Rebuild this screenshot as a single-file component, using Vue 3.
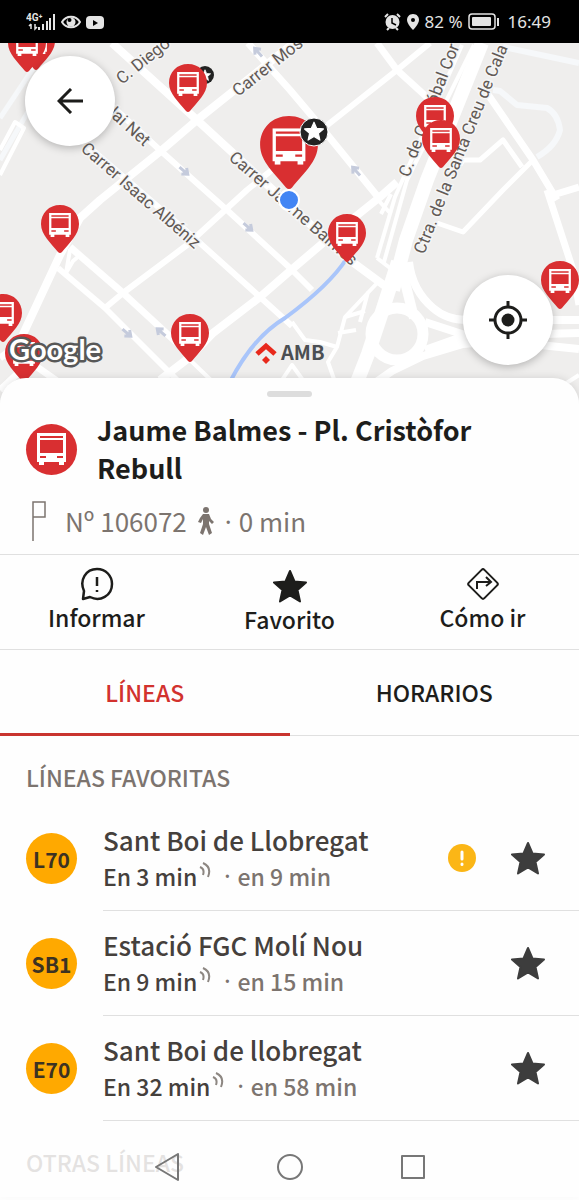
<script setup>
import { ref } from 'vue';

const activeTab = ref('lineas');

const tabs = [
  { id: 'lineas', label: 'LÍNEAS' },
  { id: 'horarios', label: 'HORARIOS' },
];

const lines = ref([
  { code: 'L70', name: 'Sant Boi de Llobregat', next: 'En 3 min', later: 'en 9 min', alert: true, favorite: true },
  { code: 'SB1', name: 'Estació FGC Molí Nou', next: 'En 9 min', later: 'en 15 min', alert: false, favorite: true },
  { code: 'E70', name: 'Sant Boi de llobregat', next: 'En 32 min', later: 'en 58 min', alert: false, favorite: true },
]);

// x and y are the tip of each pin
const stops = [
  { x: 36, y: 70 },
  { x: 27, y: 72 },
  { x: 188, y: 112 },
  { x: 60, y: 253 },
  { x: 3, y: 342 },
  { x: 24, y: 382 },
  { x: 190, y: 362 },
  { x: 347, y: 262 },
  { x: 435, y: 145 },
  { x: 441, y: 168 },
  { x: 560, y: 309 },
];

const arrows = [
  { x: 184, y: 171, r: 41 },
  { x: 248, y: 227, r: 41 },
  { x: 127, y: 333, r: 41 },
  { x: 161, y: 332, r: 221 },
  { x: 258, y: 52, r: 228 },
  { x: 356, y: 171, r: 228 },
];

const toggleFavorite = (line) => {
  line.favorite = !line.favorite;
};
</script>

<template>
  <div class="screen">
    <header class="status-bar">
      <div class="status-group">
        <svg width="30" height="20" viewBox="0 0 30 20" fill="#e4e4e4">
          <text x="0" y="9" class="network">4G⁺</text>
          <path d="M5 12v5M3 14l2-2M9 12v5l2-2" stroke="#e4e4e4" stroke-width="1.5" fill="none" />
          <path d="M12 15h2v3h-2zM16 12h2v6h-2zM20 9h2v9h-2zM23 6h2v12h-2zM27 2h2v16h-2z" />
        </svg>
        <svg width="20" height="20" viewBox="0 0 20 20">
          <path d="M1 10C5 3 15 3 19 10C15 17 5 17 1 10Z" fill="none" stroke="#e4e4e4" stroke-width="2" />
          <circle cx="10" cy="10" r="4.5" fill="#e4e4e4" />
          <circle cx="8.5" cy="8" r="2" fill="#000" />
        </svg>
        <svg width="18" height="20" viewBox="0 0 18 20">
          <rect y="4" width="18" height="13" rx="4" fill="#e4e4e4" />
          <path d="M7 8l5 3l-5 3z" fill="#000" />
        </svg>
      </div>
      <div class="status-group">
        <svg width="17" height="18" viewBox="0 0 17 18">
          <circle cx="8.5" cy="9" r="7" fill="#e4e4e4" />
          <path d="M1 4l3-3M16 4l-3-3M3 17l2-2M14 17l-2-2" stroke="#e4e4e4" stroke-width="2" />
          <path d="M8 5v5l4 2" fill="none" stroke="#000" stroke-width="1.5" />
        </svg>
        <svg width="14" height="18" viewBox="0 0 14 18">
          <path d="M7 1C3 1 1 4 1 7C1 11 7 17 7 17S13 11 13 7C13 4 11 1 7 1Z" fill="#e4e4e4" />
          <circle cx="7" cy="7" r="2" fill="#000" />
        </svg>
        <span>82 %</span>
        <svg width="32" height="18" viewBox="0 0 32 18">
          <rect x="1" y="1" width="26" height="15" rx="3" fill="none" stroke="#e4e4e4" stroke-width="1.5" />
          <rect x="4" y="4" width="19" height="9" rx="1" fill="#e4e4e4" />
          <path d="M30 5v8" stroke="#e4e4e4" stroke-width="2" />
        </svg>
        <span class="clock">16:49</span>
      </div>
    </header>

    <main>
      <section class="map">
        <svg class="map-canvas" viewBox="0 43 579 357" preserveAspectRatio="xMidYMin slice">
          <defs>
            <symbol id="bus" viewBox="0 0 29 32">
              <path
                fill="#fff"
                fill-rule="evenodd"
                d="M0 0H29V29H27V32H22V29H7V32H2V29H0ZM3 3H26V5H3ZM3 7H26V20H3ZM3 23H9V25H3ZM20 23H26V25H20Z"
              />
            </symbol>
            <symbol id="pin" viewBox="0 0 38 48">
              <path fill="#d92f31" d="M19 0C8 0 0 8 0 19C0 30 10 38 17 47Q19 49 21 47C28 38 38 30 38 19C38 8 30 0 19 0Z" />
              <use href="#bus" x="8" y="8" width="22" height="24" />
            </symbol>
            <symbol id="star" viewBox="0 0 34 34">
              <path
                fill="currentColor"
                stroke="currentColor"
                stroke-width="2"
                stroke-linejoin="round"
                d="M17 2L21.5 12.5L33 13.5L24.5 21L27 32.5L17 26.5L7 32.5L9.5 21L1 13.5L12.5 12.5Z"
              />
            </symbol>
          </defs>

          <rect y="43" width="579" height="357" fill="#efeeed" />

          <g class="road faint">
            <path d="M503 47L579 63" stroke-width="6" />
            <path d="M493 90L500 91L517 105L547 108Q558 114 560 130Q556 146 537 157" stroke-width="6" />
            <path d="M50 43L0 118M58 60L0 160" stroke-width="5" />
          </g>

          <g class="road thin">
            <path d="M462 45L395 197L377 258M474 45L407 180L384 262M377 258L390 268" />
            <path d="M378 200L391 214M391 194L381 214" />
            <path d="M0 175L24 128L15 122L0 150" />
            <path d="M70 250L66 273L73 261L79 256M380 280L345 317L337 347L320 342L305 340L292 322M345 317L365 311M338 333L356 330M368 292L360 322M337 347L328 362L335 382" />
            <path d="M190 360L214 383M280 383L292 365L305 383M540 400L579 375" />
          </g>

          <g class="road">
            <path d="M112 43L197 120L347 258L385 286" stroke-width="8" />
            <path d="M310 30L197 120L162 150L100 200L80 218L60 255L25 330L18 345" stroke-width="8" />
            <path d="M18 345L0 358M0 390L30 362L60 383" stroke-width="7" />
            <path d="M100 95L162 152L227 210L290 268L312 290" stroke-width="6" />
            <path d="M105 308L123 293L187 245L247 190L330 123L397 70L430 43" stroke-width="6" />
            <path d="M75 135L200 243L260 297L292 326" stroke-width="6" />
            <path d="M70 247L123 293L190 355" stroke-width="7" />
            <path d="M58 268L105 308L180 383" stroke-width="6" />
            <path d="M160 380L190 357L213 333L260 297L290 271L330 237L380 197L397 182" stroke-width="8" />
            <path d="M248 43L290 90L317 122L378 197" stroke-width="7" />
            <path d="M377 43L397 70L430 100" stroke-width="7" />
            <path d="M487 93L533 160L557 200" stroke-width="7" />
            <path d="M547 190L573 270L579 305M553 195L579 187" stroke-width="7" />
            <path d="M463 160L480 160L503 140L522 167M460 165L463 160" stroke-width="5" />
            <path d="M437 223L463 232L503 190L533 160" stroke-width="5" />
            <path d="M482 43L427 180L406 240L393 290" stroke-width="14" />
            <path d="M398 262L380 318L368 354L352 395" stroke-width="14" />
            <path d="M400 262L414 318" stroke-width="10" />
            <path d="M409 262Q412 290 433 308Q448 321 470 320L579 320" stroke-width="8" />
            <path d="M425 322L468 336L579 333" stroke-width="8" />
            <path d="M362 392L392 371L423 356L463 344L500 341L579 349" stroke-width="8" />
            <path d="M425 350L470 334" stroke-width="8" />
            <circle cx="397" cy="334" r="26" stroke-width="11" />
          </g>

          <path d="M347 258Q330 285 285 318Q253 337 230 382" fill="none" stroke="#a9c5fa" stroke-width="4" />

          <g fill="none" stroke="#c5cbdc" stroke-width="3">
            <path
              v-for="arrow in arrows"
              :key="`${arrow.x}-${arrow.y}`"
              d="M-6 0H4M0 -4L5 0L0 4"
              :transform="`translate(${arrow.x} ${arrow.y}) rotate(${arrow.r})`"
            />
          </g>

          <g class="street">
            <text transform="translate(122 85) rotate(-39)">C. Diego</text>
            <text transform="translate(238 97) rotate(-38)">Carrer Mos</text>
            <text transform="translate(144 147) rotate(42)" text-anchor="end">Nicolai Net</text>
            <text transform="translate(80 150) rotate(41)">Carrer Isaac Albéniz</text>
            <text transform="translate(228 159) rotate(41)">Carrer Jaume Balmes</text>
            <text transform="translate(409 178) rotate(-69)">C. de Cristóbal Cor</text>
            <text transform="translate(424 255) rotate(-68)">Ctra. de la Santa Creu de Cala</text>
          </g>

          <circle cx="205" cy="75" r="9" fill="#222" />
          <use href="#star" x="199" y="69" width="12" height="12" color="#fff" />
          <use
            v-for="stop in stops"
            :key="`${stop.x}-${stop.y}`"
            href="#pin"
            :x="stop.x - 19"
            :y="stop.y - 48"
            width="38"
            height="48"
          />
          <use href="#pin" x="260" y="116" width="58" height="73" />
          <circle cx="314" cy="132" r="14" fill="#222" stroke="#fff" stroke-width="1" />
          <use href="#star" x="304" y="121" width="20" height="20" color="#fff" />
          <circle cx="289" cy="200" r="10" fill="#4285f4" stroke="#fff" stroke-width="2" />

          <path d="M257 354L266 346L275 354" fill="none" stroke="#e8291c" stroke-width="5" />
          <path d="M266 356L270 360L266 364L262 360Z" fill="#e8291c" />
          <text x="281" y="360" class="amb">AMB</text>
          <text x="9" y="360" class="google">Google</text>
        </svg>

        <button class="round-btn back" type="button" aria-label="Volver">
          <svg width="26" height="26" viewBox="0 0 26 26" fill="none" stroke="#1d1d1b" stroke-width="3">
            <path d="M26 13H3M14 1L2 13L14 25" />
          </svg>
        </button>
        <button class="round-btn locate" type="button" aria-label="Mi ubicación">
          <svg width="38" height="38" viewBox="0 0 38 38" fill="none" stroke="#1d1d1b" stroke-width="3">
            <circle cx="19" cy="19" r="13" />
            <path d="M19 0V6M19 32V38M0 19H6M32 19H38" />
            <circle cx="19" cy="19" r="6.5" fill="#1d1d1b" stroke="none" />
          </svg>
        </button>
      </section>

      <section class="sheet">
        <div class="grip"></div>

        <div class="stop">
          <div class="stop-icon">
            <svg width="29" height="32"><use href="#bus" /></svg>
          </div>
          <h1>Jaume Balmes - Pl. Cristòfor Rebull</h1>
        </div>

        <div class="stop-info">
          <svg class="flag" width="14" height="40" viewBox="0 0 14 40" fill="none" stroke="#7c746f" stroke-width="1.5">
            <path d="M1 40V1H13V16H1" />
          </svg>
          <span>Nº 106072</span>
          <svg class="walker" width="16" height="28" viewBox="0 0 16 28" fill="#7c746f">
            <circle cx="8" cy="3" r="3" />
            <path d="M5 7H11L13 12L16 15L14 17L11 14V17L14 26L11 28L8 20L5 28L2 26L5 17V12L3 16L0 15L2 11Z" />
          </svg>
          <span class="dot">·</span>
          <span>0 min</span>
        </div>

        <div class="actions">
          <button type="button">
            <svg width="34" height="34" viewBox="0 0 34 34" fill="none" stroke="#1d1d1b" stroke-width="2.5">
              <path stroke-linejoin="round" d="M3 32L4 24C-1 13 6 2 17 2C26 2 32 9 32 17C32 29 20 35 10 30Z" />
              <path d="M17 10V19M17 23V25" />
            </svg>
            Informar
          </button>
          <button type="button">
            <svg class="star-lg" width="34" height="34"><use href="#star" /></svg>
            Favorito
          </button>
          <button type="button">
            <svg width="34" height="34" viewBox="0 0 34 34" fill="none" stroke="#1d1d1b" stroke-width="2">
              <rect x="6" y="6" width="22" height="22" rx="2" transform="rotate(45 17 17)" />
              <path d="M11 22V15H24M20 10L25 15L20 19" />
            </svg>
            Cómo ir
          </button>
        </div>

        <div class="tabs" role="tablist">
          <button
            v-for="tab in tabs"
            :key="tab.id"
            type="button"
            role="tab"
            :aria-selected="activeTab === tab.id"
            :class="{ active: activeTab === tab.id }"
            @click="activeTab = tab.id"
          >
            {{ tab.label }}
          </button>
        </div>

        <h2>LÍNEAS FAVORITAS</h2>
        <ul class="lines">
          <li v-for="line in lines" :key="line.code">
            <div class="badge">{{ line.code }}</div>
            <div class="line-body">
              <div class="line-text">
                <div class="line-name">{{ line.name }}</div>
                <div class="line-times">
                  <span class="next">{{ line.next }}</span>
                  <svg width="12" height="18" viewBox="0 0 12 18" fill="none" stroke="#8d8782" stroke-width="2">
                    <path d="M1 6Q6 8 4 14M4 2Q13 6 9 16" />
                  </svg>
                  <span class="dot">·</span>
                  <span>{{ line.later }}</span>
                </div>
              </div>
              <svg v-if="line.alert" class="alert" width="28" height="28" viewBox="0 0 28 28">
                <circle cx="14" cy="14" r="14" fill="#fbb616" />
                <path d="M14 8V15M14 20V20.5" stroke="#fff" stroke-width="3" stroke-linecap="round" />
              </svg>
              <button
                class="fav"
                :class="{ off: !line.favorite }"
                type="button"
                aria-label="Favorito"
                @click="toggleFavorite(line)"
              >
                <svg width="34" height="34"><use href="#star" /></svg>
              </button>
            </div>
          </li>
        </ul>
        <h2 class="others">OTRAS LÍNEAS</h2>
      </section>
    </main>

    <nav class="system-nav">
      <button type="button" aria-label="Atrás">
        <svg width="28" height="28" viewBox="0 0 28 28"><path d="M25 1V27L3 14Z" /></svg>
      </button>
      <button type="button" aria-label="Inicio">
        <svg width="28" height="28" viewBox="0 0 28 28"><circle cx="14" cy="14" r="12" /></svg>
      </button>
      <button type="button" aria-label="Recientes">
        <svg width="28" height="28" viewBox="0 0 28 28"><rect x="3" y="3" width="22" height="22" /></svg>
      </button>
    </nav>
  </div>
</template>

<style>
body {
  margin: 0;
  background: #fefefe;
}
</style>

<style scoped>
.screen {
  min-height: 100vh;
  overflow: hidden;
  color: #1d1d1b;
  font-family: "Noto Sans CJK SC", "Open Sans", sans-serif;
}

button {
  padding: 0;
  border: none;
  background: none;
  color: inherit;
  font-family: inherit;
  cursor: pointer;
}

svg {
  display: block;
  flex: none;
}

.status-bar {
  display: flex;
  align-items: center;
  justify-content: space-between;
  height: 43px;
  padding: 0 28px 0 26px;
  background: #000;
  color: #e4e4e4;
  font-family: "Noto Sans", sans-serif;
  font-size: 17px;
}

.status-group {
  display: flex;
  align-items: center;
  gap: 5px;
}

.network {
  font-family: Roboto, sans-serif;
  font-size: 10px;
  font-weight: 700;
}

.clock {
  margin-left: 3px;
}

.map {
  position: relative;
  height: 357px;
}

.map-canvas {
  width: 100%;
  height: 100%;
}

.road {
  fill: none;
  stroke: #fff;
  stroke-linejoin: round;
}

.thin {
  stroke-width: 4px;
}

.faint {
  stroke: #f6f8fa;
}

.street {
  fill: #625a56;
  stroke: #f5f5f5;
  stroke-width: 3px;
  paint-order: stroke;
  font-family: Roboto, sans-serif;
  font-size: 17px;
}

.amb {
  fill: #4b4f53;
  font-size: 20px;
  font-weight: 700;
}

.google {
  fill: #fff;
  stroke: #585858;
  stroke-width: 5px;
  stroke-linejoin: round;
  paint-order: stroke;
  font-family: Lato, sans-serif;
  font-size: 29px;
  font-weight: 700;
}

.round-btn {
  position: absolute;
  display: flex;
  align-items: center;
  justify-content: center;
  width: 90px;
  height: 90px;
  border-radius: 50%;
  background: #fff;
  box-shadow: 0 2px 8px rgba(0, 0, 0, 0.25);
}

.back {
  top: 13px;
  left: 25px;
}

.locate {
  right: 26px;
  bottom: 35px;
}

.sheet {
  position: relative;
  margin-top: -22px;
  padding-top: 13px;
  border-radius: 26px 26px 0 0;
  background: #fefefe;
  box-shadow: 0 0 8px rgba(0, 0, 0, 0.12);
}

.grip {
  width: 45px;
  height: 6px;
  margin: 0 auto;
  border-radius: 3px;
  background: #ddd;
}

.stop {
  display: flex;
  align-items: center;
  gap: 20px;
  padding: 14px 80px 0 26px;
}

.stop-icon,
.badge {
  display: flex;
  flex: none;
  align-items: center;
  justify-content: center;
  width: 51px;
  height: 51px;
  border-radius: 50%;
}

.stop-icon {
  background: #d92f31;
}

h1 {
  margin: 0;
  font-size: 27px;
  font-weight: 700;
  line-height: 38px;
}

.stop-info {
  display: flex;
  align-items: center;
  height: 67px;
  padding-left: 32px;
  color: #7c746f;
  font-size: 26px;
  line-height: 38px;
}

.flag {
  margin-right: 19px;
}

.walker {
  margin: 0 11px;
}

.dot {
  margin-right: 7px;
  font-family: "Noto Sans", sans-serif;
}

.actions {
  display: grid;
  grid-template-columns: repeat(3, 1fr);
  height: 94px;
  border-top: 1px solid #e0e0e0;
  border-bottom: 1px solid #e0e0e0;
}

.actions button {
  display: flex;
  flex-direction: column;
  align-items: center;
  padding-top: 12px;
  font-size: 23px;
  font-weight: 500;
  line-height: 32px;
}

.star-lg {
  margin-top: 2px;
}

.tabs {
  display: grid;
  grid-template-columns: 1fr 1fr;
}

.tabs button {
  height: 86px;
  padding-bottom: 2px;
  border-bottom: 1px solid #e0e0e0;
  font-size: 23px;
  font-weight: 500;
}

.tabs .active {
  padding-bottom: 0;
  border-bottom: 3px solid #c9352f;
  color: #d2322e;
}

h2 {
  margin: 0;
  padding: 24px 26px 12px;
  color: #7c746f;
  font-size: 23px;
  font-weight: 500;
  line-height: 34px;
}

.lines {
  margin: 0;
  padding: 0;
  list-style: none;
}

.lines li {
  display: flex;
  align-items: center;
  gap: 26px;
  padding-left: 26px;
}

.badge {
  background: #ffa900;
  color: #3c3222;
  font-size: 21px;
  font-weight: 700;
}

.line-body {
  display: flex;
  flex: 1;
  align-items: center;
  height: 104px;
  padding-right: 34px;
  border-bottom: 1px solid #e0e0e0;
}

.line-text {
  flex: 1;
}

.line-name {
  color: #45403c;
  font-size: 26px;
  font-weight: 500;
  line-height: 36px;
}

.line-times {
  display: flex;
  align-items: center;
  color: #7c746f;
  font-size: 23px;
  font-weight: 500;
  line-height: 36px;
}

.line-times svg {
  margin: 0 13px 12px 2px;
}

.next {
  color: #45403c;
}

.alert {
  margin-right: 35px;
}

.fav {
  color: #3d3d3d;
}

.off {
  color: #ccc;
}

.others {
  padding-bottom: 18px;
}

.system-nav {
  position: fixed;
  right: 0;
  bottom: 0;
  left: 0;
  display: flex;
  align-items: center;
  justify-content: center;
  gap: 95px;
  height: 66px;
  background: rgba(254, 254, 254, 0.8);
}

.system-nav svg {
  fill: none;
  stroke: #777;
  stroke-width: 2px;
  stroke-linejoin: round;
}
</style>
